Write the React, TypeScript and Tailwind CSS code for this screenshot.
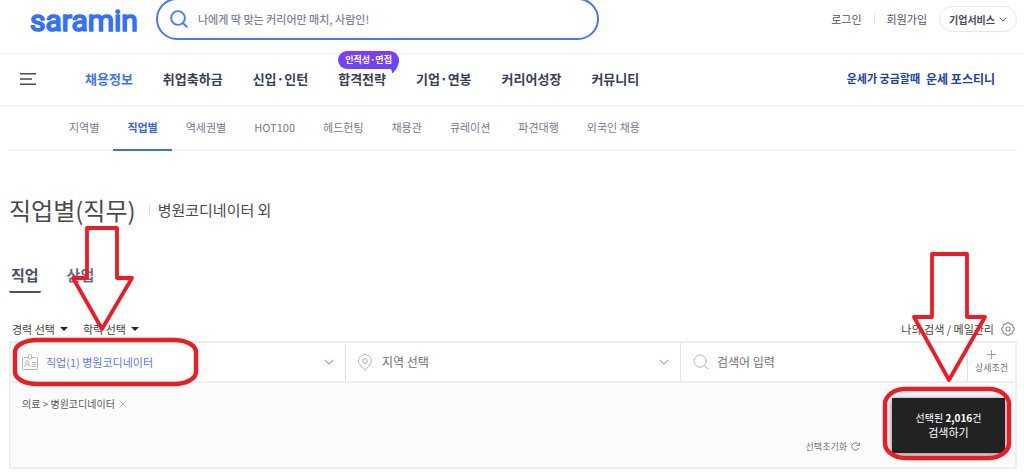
import React, { useState } from "react";

const mainMenu = [
  { label: "채용정보", active: true },
  { label: "취업축하금" },
  { label: "신입·인턴" },
  { label: "합격전략", badge: "인적성·면접" },
  { label: "기업·연봉" },
  { label: "커리어성장" },
  { label: "커뮤니티" },
];

const subMenu = [
  "지역별",
  "직업별",
  "역세권별",
  "HOT100",
  "헤드헌팅",
  "채용관",
  "큐레이션",
  "파견대행",
  "외국인 채용",
];

function Chevron({ className }: { className: string }) {
  return (
    <svg className={className} viewBox="0 0 10 6" fill="none" stroke="currentColor" aria-hidden="true">
      <path d="M0.8 0.8 L5 5 L9.2 0.8" strokeWidth="1.1" />
    </svg>
  );
}

function SearchIcon({ className, strokeWidth }: { className: string; strokeWidth: number }) {
  return (
    <svg
      className={className}
      viewBox="0 0 18 18"
      fill="none"
      stroke="currentColor"
      strokeWidth={strokeWidth}
      strokeLinecap="round"
      aria-hidden="true"
    >
      <circle cx="8" cy="8" r="6.9" />
      <path d="M13 13.2 L16.8 16.8" />
    </svg>
  );
}

function Header() {
  return (
    <header className="flex h-[54px] items-start border-b border-gray-100 pl-[29px] pr-[7px]">
      <a href="#" className="shrink-0" aria-label="saramin">
        <svg className="h-10 w-[112px]" viewBox="0 0 112 40" aria-hidden="true">
          <text
            x="1"
            y="31"
            className="font-['Roboto',sans-serif] text-[30px] font-normal"
            fill="#3270ff"
            stroke="#3270ff"
            strokeWidth="1.7"
            strokeLinejoin="round"
          >
            saramin
          </text>
        </svg>
      </a>
      <form className="-mt-[2px] ml-[15px] flex h-[42px] w-[443px] items-center rounded-full border-2 border-[#4876ef] pl-3">
        <SearchIcon className="size-[18px] shrink-0 text-[#4c7cf0]" strokeWidth={1.9} />
        <input
          type="text"
          aria-label="통합검색"
          placeholder="나에게 딱 맞는 커리어만 매치, 사람인!"
          className="ml-2.5 min-w-0 flex-1 text-[11px] font-medium outline-none placeholder:text-[#7b8494]"
        />
      </form>
      <div className="ml-auto mt-[6px] flex h-[26px] items-center text-[11px] text-[#4f5662]">
        <a href="#">로그인</a>
        <span className="mx-3 h-[10px] w-px bg-gray-200" />
        <a href="#">회원가입</a>
        <button className="ml-3 flex h-[26px] items-center gap-1 rounded-full border border-gray-200 px-[9px] text-[10px] font-bold text-[#424a5a]">
          기업서비스
          <Chevron className="h-[5px] w-[8px]" />
        </button>
      </div>
    </header>
  );
}

function MainNav() {
  return (
    <nav className="flex h-[53px] items-center border-b-2 border-gray-100 pb-[2px] pl-5 pr-[29px]">
      <button aria-label="전체메뉴" className="mr-[49px]">
        <svg className="h-3 w-4" viewBox="0 0 16 12" stroke="#434a60" strokeWidth="1.4" aria-hidden="true">
          <path d="M0 0.8H16M0 6H12M0 11.2H16" />
        </svg>
      </button>
      <ul className="flex gap-[30px] text-[13px] font-bold text-[#373f57]">
        {mainMenu.map((item) => (
          <li key={item.label} className="relative whitespace-nowrap">
            <a href="#" className={item.active ? "text-[#3e73f5]" : ""}>
              {item.label}
            </a>
            {item.badge && (
              <span className="absolute -top-[18px] left-0 flex h-[18px] items-center rounded-full bg-linear-to-b from-[#8338fa] to-[#6747fb] px-[7px] text-[9px] text-white">
                {item.badge}
                <svg className="absolute right-0 top-[9px] h-[14px] w-[10px]" viewBox="0 0 10 14" aria-hidden="true">
                  <path d="M10 0C10 5 7 11 3 13.500C3 11 3 9 0 8.500V5Z" fill="#6747fb" />
                </svg>
              </span>
            )}
          </li>
        ))}
      </ul>
      <a href="#" className="ml-auto flex items-center gap-[6px] whitespace-nowrap font-bold text-[#1a41ab]">
        <span className="text-[11px]">운세가 궁금할때</span>
        <span className="text-[12px]">운세 포스티니</span>
      </a>
    </nav>
  );
}

function SubNav() {
  return (
    <nav className="ml-[9px] mr-[7px] border-b-2 border-[#f1f5f9] pl-[46px]">
      <ul className="-mb-[2px] flex text-[11px] text-[#747c8b]">
        {subMenu.map((label) => (
          <li key={label}>
            <a
              href="#"
              className={
                label === "직업별"
                  ? "flex h-11 items-center whitespace-nowrap border-b-2 border-[#3f6fe8] px-[14px] pb-[2px] font-bold text-[#3566e8]"
                  : "flex h-11 items-center whitespace-nowrap px-[14px] pb-1"
              }
            >
              {label}
            </a>
          </li>
        ))}
      </ul>
    </nav>
  );
}

function QuickSelect({ label }: { label: string }) {
  return (
    <span className="relative flex items-center">
      <select aria-label={label} className="appearance-none bg-transparent pr-[13px] outline-none">
        <option>{label}</option>
      </select>
      <svg className="pointer-events-none absolute right-0 h-[4px] w-[8px]" viewBox="0 0 8 4" aria-hidden="true">
        <path d="M0 0H8L4 4Z" fill="#222" />
      </svg>
    </span>
  );
}

function JobMark() {
  return (
    <svg
      className="pointer-events-none absolute -top-[118px] left-0 z-10 h-[165px] w-[190px]"
      viewBox="0 0 190 165"
      fill="none"
      stroke="#ed1c24"
      aria-hidden="true"
    >
      <path d="M76 3H106V53H121L91 104L62 53H76Z" strokeWidth="3.8" strokeLinejoin="round" />
      <rect x="4" y="115" width="181" height="44" rx="22" ry="12" strokeWidth="4.400" />
    </svg>
  );
}

function SearchMark() {
  return (
    <svg
      className="pointer-events-none absolute -left-[12px] -top-[148px] z-10 h-[215px] w-[135px]"
      viewBox="0 0 135 215"
      fill="none"
      stroke="#ed1c24"
      aria-hidden="true"
    >
      <path d="M52 4H87V67H105L69 130L34 67H52Z" strokeWidth="3.800" strokeLinejoin="round" />
      <rect x="5" y="139" width="124" height="69" rx="20" ry="15" strokeWidth="4.400" />
    </svg>
  );
}

function SearchFilter() {
  const [keyword, setKeyword] = useState("");

  return (
    <section className="border-2 border-[#eee] bg-[#fcfcfc]">
      {/* Condition row */}
      <div className="grid h-[38px] grid-cols-[1fr_1fr_287px_47px] divide-x divide-[#e2e2e2] bg-white text-[12px] text-[#707070]">
        <div className="relative">
          <button className="flex h-full w-full items-center pl-[11px] pr-[11px] text-[11px] text-[#5878f0]">
            <svg className="mr-2 h-4 w-4 shrink-0" viewBox="0 0 16 16" fill="none" stroke="#b4b4b4" aria-hidden="true">
              <path d="M6.500 3.500H1.500Q0.500 3.500 0.500 4.500V14.500Q0.500 15.500 1.500 15.500H14.500Q15.500 15.500 15.500 14.500V4.500Q15.500 3.500 14.500 3.500H9.500" />
              <rect x="6.500" y="0.500" width="3" height="4.500" rx="0.800" />
              <circle cx="5.200" cy="8.400" r="1.700" />
              <path d="M2.500 13C2.500 9.900 8 9.900 8 13M10 8.500H14M10 10.500H14M10 12.500H14" />
            </svg>
            직업(1) 병원코디네이터
            <Chevron className="ml-auto h-[6px] w-[10px] text-[#a8a8a8]" />
          </button>
          <JobMark />
        </div>
        <button className="flex items-center pl-3 pr-[11px]">
          <svg className="mr-[10px] h-[17px] w-[14px]" viewBox="0 0 14 17" fill="none" stroke="#b0b0b0" aria-hidden="true">
            <path d="M7 16.300C5 13.700 0.600 10.500 0.600 6.900C0.600 3.400 3.400 0.600 7 0.600S13.400 3.400 13.400 6.900C13.400 10.500 9 13.700 7 16.300Z" />
            <circle cx="7" cy="7" r="2.400" />
          </svg>
          지역 선택
          <Chevron className="ml-auto h-[6px] w-[10px] text-[#a8a8a8]" />
        </button>
        <label className="flex items-center pl-3">
          <SearchIcon className="size-4 shrink-0 text-[#b4b4b4]" strokeWidth={1.1} />
          <input
            type="text"
            aria-label="검색어 입력"
            value={keyword}
            onChange={(e) => setKeyword(e.target.value)}
            placeholder="검색어 입력"
            className="ml-2 min-w-0 flex-1 outline-none placeholder:text-[#707070]"
          />
        </label>
        <button className="flex flex-col items-center justify-center gap-[2px] text-[9px] leading-[14px]">
          <svg className="size-[9px]" viewBox="0 0 9 9" stroke="#a0a0a0" aria-hidden="true">
            <path d="M4.500 0V9M0 4.500H9" />
          </svg>
          상세조건
        </button>
      </div>

      {/* Selected conditions */}
      <div className="flex h-[86px] items-start border-t-2 border-[#eee] pl-[11px] pr-[10px] pt-[13px]">
        <span className="flex items-center gap-1 text-[10px] text-[#555]">
          의료 &gt; 병원코디네이터
          <button aria-label="삭제">
            <svg className="size-2" viewBox="0 0 8 8" stroke="#b5b5b5" aria-hidden="true">
              <path d="M0.500 0.500L7.500 7.500M7.500 0.500L0.500 7.500" />
            </svg>
          </button>
        </span>
        <button className="ml-auto mr-8 mt-11 flex items-center gap-1 text-[9px] text-[#707070]">
          선택초기화
          <svg className="size-[9px]" viewBox="0 0 9 9" fill="none" stroke="#808080" aria-hidden="true">
            <path d="M7.900 6A3.700 3.700 0 1 1 7.700 2.600M8.400 0.500V3.400H5.500" />
          </svg>
        </button>
        <div className="relative mt-[2px]">
          <button className="flex h-[55px] w-[113px] flex-col items-center justify-center bg-[#222] pb-[2px] text-[11px] leading-[15px] text-white shadow-[0_1px_6px_#0008]">
            <span className="text-[10px]">
              선택된 <b>2,016</b>건
            </span>
            <span>검색하기</span>
          </button>
          <SearchMark />
        </div>
      </div>
    </section>
  );
}

export default function App() {
  return (
    <div className="overflow-hidden bg-white font-['Noto_Sans_CJK_KR',sans-serif]">
      <Header />
      <MainNav />
      <SubNav />
      <main className="pb-1 pl-[9px] pr-[7px] pt-[39px]">
        <div className="flex h-10 items-center text-[#4a4a4a]">
          <h1 className="text-[24px]">직업별(직무)</h1>
          <span className="ml-[13px] mr-2 h-[10px] w-px bg-gray-300" />
          <p className="text-[15px]">병원코디네이터 외</p>
        </div>

        <div className="mt-[31px] flex gap-[26px] text-[15px] font-bold">
          <button className="h-8 rounded-xs border-b-2 border-[#484f69] px-[2px] pb-[2px] text-[#484f69]">직업</button>
          <button className="h-8 pb-1 text-[#67708a]">산업</button>
        </div>

        <div className="mt-6 flex h-6 items-center gap-[15px] pl-[3px] text-[11px] text-[#444]">
          <QuickSelect label="경력 선택" />
          <QuickSelect label="학력 선택" />
          <button className="ml-auto">나의 검색 / 메일관리</button>
          <button aria-label="설정" className="-ml-2 mr-[2px]">
            <svg className="size-[14px]" viewBox="0 0 24 24" fill="none" stroke="#8c8c8c" strokeWidth="1.900" aria-hidden="true">
              <path
                d="M9.500 2.500Q12 -0.500 14.500 2.500Q15.300 4 17 3.600Q20.600 3.400 20.400 7Q20 8.700 21.500 9.500Q24.500 12 21.500 14.500Q20 15.300 20.400 17Q20.600 20.600 17 20.400Q15.300 20 14.500 21.500Q12 24.500 9.500 21.500Q8.700 20 7 20.400Q3.400 20.600 3.600 17Q4 15.300 2.500 14.500Q-0.500 12 2.500 9.500Q4 8.700 3.600 7Q3.400 3.400 7 3.600Q8.700 4 9.500 2.500Z"
                strokeLinejoin="round"
              />
              <circle cx="12" cy="12" r="3.500" />
            </svg>
          </button>
        </div>

        <SearchFilter />
      </main>
    </div>
  );
}
